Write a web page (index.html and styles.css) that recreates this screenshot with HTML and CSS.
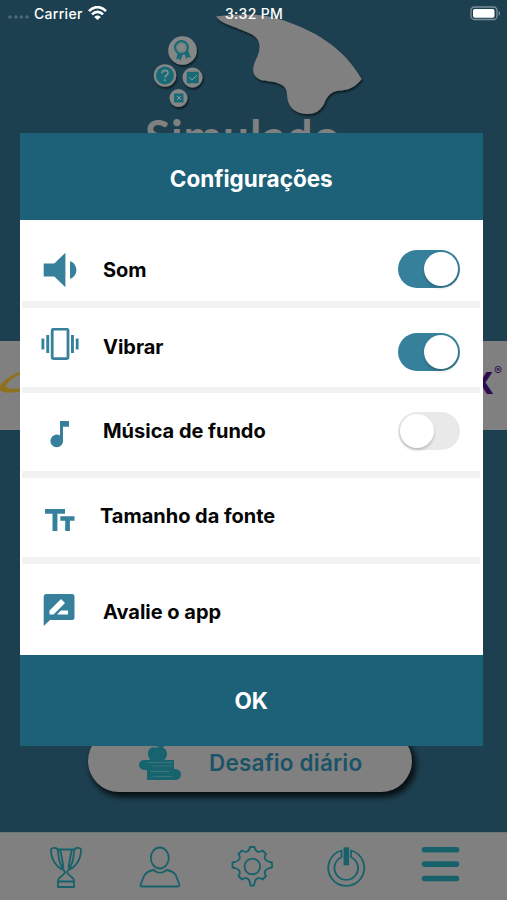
FILE: index.html
```html
<!DOCTYPE html>
<html lang="pt-BR">
<head>
<meta charset="utf-8">
<title>Simulado</title>
<link rel="stylesheet" href="styles.css">
</head>
<body>
<div class="screen">
  <header class="status">
    <div class="carrier">
      <svg width="22" height="6" viewBox="0 0 22 6" fill="#4c6975"><circle cx="3" cy="4" r="1.800"/><circle cx="9" cy="4" r="1.800"/><circle cx="14.400" cy="4" r="1.800"/><circle cx="20" cy="4" r="1.800"/></svg>
      <span>Carrier</span>
      <svg class="wifi" width="19" height="15" viewBox="0 0 19 15" fill="none" stroke="#fff" stroke-width="2.700"><path d="M1 5.100C6-.2 13-.2 18 5.100M4 8.400c3.400-3.300 7.600-3.300 11 0"/><path d="M9.500 14 6.200 10.900c2-1.800 4.600-1.800 6.600 0z" fill="#fff" stroke="none"/></svg>
    </div>
    <span class="clock">3:32 PM</span>
    <svg class="battery" width="31" height="15" viewBox="0 0 31 15"><rect x="1" y="1" width="26" height="12.500" rx="3.500" fill="none" stroke="#7c8f99" stroke-width="1.300"/><rect x="3" y="3" width="21.500" height="8.700" rx="1.800" fill="#fff"/><path d="M28.700 5c2 1 2 3.700 0 4.700z" fill="#7c8f99"/></svg>
  </header>

  <section class="hero">
    <svg class="logo" width="250" height="106" viewBox="140 12 250 106">
      <defs><filter id="sh" x="-20%" y="-20%" width="150%" height="150%"><feDropShadow dx="1" dy="2" stdDeviation="1.300" flood-color="#000" flood-opacity=".6"/></filter></defs>
      <path filter="url(#sh)" fill="#808080" d="M216 16.500C234 14 258 13 277 18.500C314 29 345 49 361.500 79C358 84 351 90 341 90.500C332 91 327 95 324 104C320 111 315 114 307 114C298 114 290 109 288 101C286 94 289 88 280 84C270 79 260 84 254 74C250 63 262 56 259 43C257 34 246 32 239 29C231 25 222 24 216 16.500Z"/>
      <g filter="url(#sh)" fill="#858786"><circle cx="182.500" cy="50.500" r="14.300"/><circle cx="165" cy="75.500" r="11.200"/><circle cx="192.500" cy="77.500" r="10"/><circle cx="178.500" cy="98" r="9"/></g>
      <g fill="none" stroke="#176a76">
        <path fill="#176a76" stroke="none" d="M178 51l-1.800 8.500 2.700-1 1.600 2.500 2.300-7zM184 52l2.200 7 1.800-2 3 1-3-8z"/>
        <circle cx="181.500" cy="47.500" r="6.400" fill="#858786" stroke-width="2.200"/>
        <circle cx="181.500" cy="47.500" r="4.200" stroke="#5b8388" stroke-width=".8"/>
        <circle cx="165" cy="75.500" r="9" fill="#176a76" stroke="none"/>
        <path d="M162 73.500c0-4 6-4 6-.5 0 2.200-3 2.200-3 4.800M165 79.200v1.800" stroke="#7e9292" stroke-width="1.700"/>
        <rect x="186.700" y="71.700" width="12" height="11.500" rx="1" fill="#176a76" stroke="none"/>
        <path d="M189.300 77.500l2.500 2.400 5-4.400" stroke="#92a2a2" stroke-width="1"/>
        <rect x="174" y="93.500" width="9.500" height="9" fill="#176a76" stroke="none"/>
        <path d="M177 96l3.700 3.800M180.700 96l-3.700 3.800" stroke="#92a2a2" stroke-width="1"/>
      </g>
    </svg>
    <div class="brand">Simulado</div>
  </section>

  <section class="sponsors">
    <svg width="40" height="50" viewBox="0 0 40 50"><path d="M40 6C20 6-7 24 1 30c5 3.500 22 1 34-4v-3c-12 4.500-24 6-28 3.500C2 22 24 9 40 7.500z" fill="#8d721d"/></svg>
    <div class="sponsor">X<sup>®</sup></div>
  </section>

  <section class="actions">
    <div class="daily">
      <svg width="44" height="36" viewBox="0 0 44 36" fill="#17636e"><path d="M19.500 3.500c-1-2-2-3-4-3M20 4c1-3 4-3 6-2-2 2-4 3-6 2" stroke="#17636e"/><path d="M19 4c-5-2-9 0-9 6 0 4 3 7 5 8h9c3-2 5-5 5-8 0-6-5-8-10-6z"/><rect x="1" y="16" width="35" height="10" rx="5"/><path d="M20 16h16v10H20z"/><rect x="9" y="25" width="34" height="11" rx="5.500"/><path d="M9 25h10v11H9z"/><path d="M9 18.500h25M15 22h19M12 27.500h20M15 32.500h19" stroke="#4a757a" stroke-width=".8"/></svg>
      <span>Desafio diário</span>
    </div>
  </section>

  <nav class="tabs">
    <svg viewBox="0 0 44 44"><path d="M14 4.500h16c0 12-3 18-7 22.500 0 3 7 5 7 8.500v6.500H14v-6.500c0-3.500 7-5.500 7-8.500-4-5-7-12-7-22.500zM14 6c0-4-7-4-7-1 0 9 5 17 12.500 20M30 6c0-4 7-4 7-1 0 9-5 17-12.500 20M16.500 6l3 16M27.500 6l-3 16M14 36.500h15"/></svg>
    <svg viewBox="0 0 44 44"><ellipse cx="21.800" cy="13" rx="9" ry="10.500"/><path d="M15.500 25c4 3.500 9 3.500 13 0 6 1 9 3 10 7l3 8c0 1-.5 1.500-1.500 1.500H4c-1 0-1.500-.5-1.500-1.500l3-8c1.500-4 5-6 10-7z"/></svg>
    <svg viewBox="0 0 44 44"><path d="M19 2h4.500c1 5 4 6 8 3.500l3.500 3.500c-2.500 4-1.500 6.500 3.500 8l2.500.5v5l-2.500.5c-5 1.500-6 4-3.500 8l-3.500 3.500c-4-2.500-7-1.500-8 3.500l-.5 2.500h-3.500l-.5-2.500c-1-5-4-6-8-3.500l-3.500-3.500c2.500-4 1.500-6.500-3.500-8l-2.500-.5v-5l2.500-.5c5-1.500 6-4 3.500-8l3.500-3.500c4 2.500 7 1.500 8-3.500z"/><circle cx="21.300" cy="21.500" r="7.800"/></svg>
    <svg viewBox="0 0 44 44"><path d="M16.500 5.500a18 18 0 1 0 9.500 0v6.700a11.800 11.800 0 1 1-9.500 0z"/><path d="M21.300 2.300v18" stroke-width="5.500" stroke-linecap="butt"/></svg>
    <svg viewBox="0 0 44 44"><path d="M6.500 4.700h32M6.500 19.100h32M6.500 33.500h32" stroke-width="5.600"/></svg>
  </nav>

  <main class="modal">
    <h1>Configurações</h1>
    <div class="list">
      <div class="row sound">
        <svg width="34" height="36" viewBox="0 0 34 36"><path d="M.7 11.500h10.600L22.400.7v34.600L11.300 24.500H.7zM27 9.200c8.500 2.500 8.500 15 0 17.500z"/></svg>
        <span>Som</span><i class="toggle on"></i>
      </div>
      <div class="row vibrate">
        <svg width="38" height="32" viewBox="0 0 38 32"><rect x="11.200" y="1.200" width="15.800" height="29.400" rx="1.500" fill="none" stroke="#37809c" stroke-width="2.800"/><path d="M.5 10.500h2.800v11H.5zM5.300 7h2.900v18H5.300zM30 7h2.900v18H30zM34.800 10.500h2.800v11h-2.800z"/></svg>
        <span>Vibrar</span><i class="toggle on"></i>
      </div>
      <div class="row music">
        <svg width="20" height="28" viewBox="0 0 20 28"><path d="M10 1h9v5.700h-6V20a6.300 6.300 0 1 1-3-4.500z"/></svg>
        <span>Música de fundo</span><i class="toggle"></i>
      </div>
      <div class="row font-size">
        <svg width="30" height="23" viewBox="0 0 30 23"><path d="M0 0h20v4.700h-7.600V22H7.500V4.700H0zM15.300 7.200h14.200v4.500h-4.600V22h-4.700V11.700h-4.900z"/></svg>
        <span>Tamanho da fonte</span>
      </div>
      <div class="row rate">
        <svg width="32" height="34" viewBox="0 0 32 34"><path d="M3 1h26a2.500 2.500 0 0 1 2.500 2.500v21A2.500 2.500 0 0 1 29 27H7L.7 33V3.500A2.500 2.500 0 0 1 3 1z"/><path d="M6.500 17.500 18 6l4 4-11.500 11.500h-4zM14 21.500l4-4h7v4z" fill="#fff"/></svg>
        <span>Avalie o app</span>
      </div>
    </div>
    <button class="ok">OK</button>
  </main>
</div>
</body>
</html>
```

FILE: styles.css
```css
* { box-sizing: border-box; }
body { margin: 0; font-family: Inter, "Liberation Sans", sans-serif; }
svg { display: block; flex: none; }

.screen {
  position: relative;
  display: flex;
  flex-direction: column;
  width: 507px;
  height: 900px;
  overflow: hidden;
  background: #1d4050;
}

.status {
  position: relative;
  z-index: 1;
  display: grid;
  grid-template-columns: 1fr auto 1fr;
  align-items: center;
  height: 26px;
  padding: 0 6px 0 7px;
  color: #fff;
  font-size: 14px;
  font-weight: 500;
}
.carrier { display: flex; align-items: center; gap: 5px; letter-spacing: 0.3px; }
.carrier svg:first-child { margin-top: 6px; }
.clock { letter-spacing: 0.3px; }
.battery { justify-self: end; }

.hero { height: 315px; }
.logo { margin: -14px 0 0 140px; }
.brand {
  margin: -7px 0 0 145px;
  color: #808080;
  font: 700 46px/50px Lato, sans-serif;
  letter-spacing: 0.9px;
}

.sponsors {
  display: flex;
  justify-content: space-between;
  height: 89px;
  padding-top: 20px;
  background: #808080;
}
.sponsor {
  display: flex;
  margin-right: 5px;
  color: #2d0b4e;
  font-size: 30px;
  font-weight: 800;
  line-height: 44px;
}
.sponsor sup { font-size: 12px; font-weight: 400; line-height: 20px; }

.actions {
  display: flex;
  flex-direction: column;
  justify-content: flex-end;
  height: 402px;
  padding: 0 95px 40px 88px;
}
.daily {
  display: flex;
  align-items: center;
  gap: 27px;
  height: 62px;
  padding: 2px 0 0 50px;
  border-radius: 31px;
  background: #808080;
  box-shadow: 3px 4px 6px 1px #000c;
  color: #1b5366;
  font-size: 22.5px;
  font-weight: 600;
  letter-spacing: 0.2px;
}

.tabs {
  display: flex;
  justify-content: space-between;
  height: 68px;
  padding: 12px 45px 0 44px;
  border-top: 1px solid #6b777b;
  background: #808080;
}
.tabs svg {
  width: 44px;
  height: 44px;
  fill: none;
  stroke: #17616b;
  stroke-width: 1.8;
  stroke-linejoin: round;
  stroke-linecap: round;
}

.modal {
  position: absolute;
  top: 133px;
  left: 20px;
  display: flex;
  flex-direction: column;
  width: 462.5px;
  height: 612.5px;
  background: #fff;
}
h1, .ok {
  display: flex;
  align-items: center;
  justify-content: center;
  width: 100%;
  margin: 0;
  border: 0;
  background: #1c6178;
  color: #fff;
  font-family: inherit;
  font-size: 22.5px;
  font-weight: 650;
}
h1 { height: 87px; padding-top: 3px; }
.ok { height: 90.5px; }

.list { height: 435px; padding: 0 2.5px 0 2px; }
.row {
  display: grid;
  grid-template-columns: 36px 1fr auto;
  column-gap: 25px;
  align-items: center;
  height: 86px;
  padding: 0 20px;
  border-bottom: 7px solid #f2f2f2;
  color: #050505;
  font-size: 20px;
  font-weight: 680;
  letter-spacing: -0.02px;
}
.row svg { justify-self: center; fill: #37809c; }
.sound { height: 88px; padding-top: 17px; }
.sound span { margin-top: 2px; }
.sound svg { margin: 2px 1px 0 0; }
.vibrate { height: 85px; border-width: 6px; }
.vibrate svg { margin-top: -7px; }
.vibrate span { margin-top: -1px; }
.vibrate .toggle { margin-top: 9px; }
.music { height: 85px; }
.music svg { margin-top: 3px; }
.music span { margin-top: -2px; }
.music .toggle { margin-top: -3px; }
.font-size span { margin: -4px 0 0 -3px; }
.font-size svg { margin-top: 6px; }
.rate { height: 91px; border: 0; }
.rate span { margin-top: 4px; }
.rate svg { margin-right: 2px; }

.toggle {
  display: flex;
  width: 62.5px;
  height: 38px;
  padding: 2px;
  border-radius: 19px;
  background: #e9e9e9;
}
.toggle::before {
  content: "";
  width: 34px;
  height: 34px;
  border-radius: 50%;
  background: #fff;
  box-shadow: 0 2px 3px #0003;
}
.toggle.on { justify-content: flex-end; background: #37809c; }
```
